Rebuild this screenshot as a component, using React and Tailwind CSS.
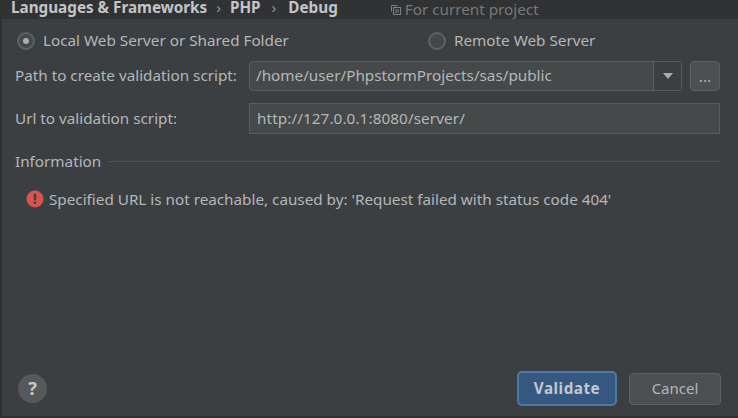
function Radio({ checked, label }) {
  return (
    <div className="flex items-center gap-[8px]">
      <span className="flex h-[18px] w-[18px] items-center justify-center rounded-full border-2 border-[#5f6263] bg-[#43494a]">
        {checked && <span className="h-[6px] w-[6px] rounded-full bg-[#a9adaf]" />}
      </span>
      <span>{label}</span>
    </div>
  );
}

function ErrorIcon() {
  return (
    <svg width="18" height="18" viewBox="0 0 18 18" className="shrink-0">
      <circle cx="9" cy="9" r="8.5" fill="#d9534f" />
      <rect x="7.8" y="3.8" width="2.4" height="6.6" rx="0.8" fill="#3c3f41" />
      <rect x="7.8" y="11.6" width="2.4" height="2.4" rx="0.8" fill="#3c3f41" />
    </svg>
  );
}

export default function App() {
  return (
    <div className="flex h-[418px] w-[738px] flex-col overflow-hidden bg-[#3c3f41] font-['Noto_Sans',sans-serif] text-[15.25px] text-[#b4b7b9]">
      {/* breadcrumb strip */}
      <div className="flex h-[19px] shrink-0 items-center bg-[#303234] pb-[4px] pl-[11px]">
        <span className="font-bold text-[#c3c5c7]">Languages &amp; Frameworks</span>
        <span className="mx-[9px] text-[#8f9294]">›</span>
        <span className="font-bold text-[#c3c5c7]">PHP</span>
        <span className="ml-[11px] mr-[12px] text-[#8f9294]">›</span>
        <span className="font-bold text-[#c3c5c7]">Debug</span>
        <svg width="11" height="11" viewBox="0 0 11 11" className="ml-[52px] mt-[3px]" fill="none" stroke="#7f8284">
          <path d="M1.5 7.5v-6h6" />
          <rect x="3.5" y="3.5" width="7" height="7" />
          <path d="M5 6h4M5 8h4" />
        </svg>
        <span className="ml-[4px] mt-[3px] text-[#77797b]">For current project</span>
      </div>

      <div className="flex min-h-0 flex-1 flex-col border-l-2 border-[#2f3133] pl-[13px] pr-[17px]">
        <div className="mt-[12px] flex h-[19px] items-center pl-[2px]">
          <div className="w-[411px]">
            <Radio checked label="Local Web Server or Shared Folder" />
          </div>
          <Radio label="Remote Web Server" />
        </div>

        <div className="mt-[11px] flex h-[30px] items-center">
          <span className="w-[234px] shrink-0 pb-[2px]">Path to create validation script:</span>
          <div className="flex h-[30px] w-[433px] items-center justify-between rounded-[3px] border border-[#5a5d5f] bg-[#45494a]">
            <span className="pb-[2px] pl-[6px]">/home/user/PhpstormProjects/sas/public</span>
            <span className="flex h-full w-[28px] items-center justify-center border-l border-[#5a5d5f] bg-[#3c3f41]">
              <span className="h-0 w-0 border-x-[5px] border-t-[6px] border-x-transparent border-t-[#a9adaf]" />
            </span>
          </div>
          <div className="ml-[8px] flex h-[30px] w-[30px] items-center justify-center rounded-[4px] border border-[#5e6060] bg-[#4c5052]">
            ...
          </div>
        </div>

        <div className="mt-[12px] flex h-[31px] items-center">
          <span className="w-[234px] shrink-0">Url to validation script:</span>
          <div className="flex h-[31px] w-[471px] items-center border border-[#5a5d5f] bg-[#45494a] pl-[7px] tracking-[0.1px]">
            http://127.0.0.1:8080/server/
          </div>
        </div>

        <div className="mt-[16px] flex items-center gap-[7px]">
          <span>Information</span>
          <span className="h-px flex-1 bg-[#515455]" />
        </div>

        <div className="mt-[15px] flex items-center gap-[5px] pl-[11px]">
          <ErrorIcon />
          <span>Specified URL is not reachable, caused by: 'Request failed with status code 404'</span>
        </div>

        <div className="mt-auto mb-[10px] flex items-center">
          <div className="ml-[3px] flex h-[29px] w-[29px] items-center justify-center rounded-full bg-[#55595b] text-[18px] font-bold text-[#c6c8c9]">
            ?
          </div>
          <button className="ml-auto h-[35px] w-[100px] rounded-[5px] border-2 border-[#4a78a8] bg-[#365880] font-bold tracking-[0.5px] text-[#c3c8cd]">
            Validate
          </button>
          <button className="ml-[12px] h-[32px] w-[92px] rounded-[4px] border border-[#5e6060] bg-[#4c5052] text-[15px]">
            Cancel
          </button>
        </div>
      </div>
      <div className="h-[2px] shrink-0 bg-[#2f3133]" />
    </div>
  );
}
